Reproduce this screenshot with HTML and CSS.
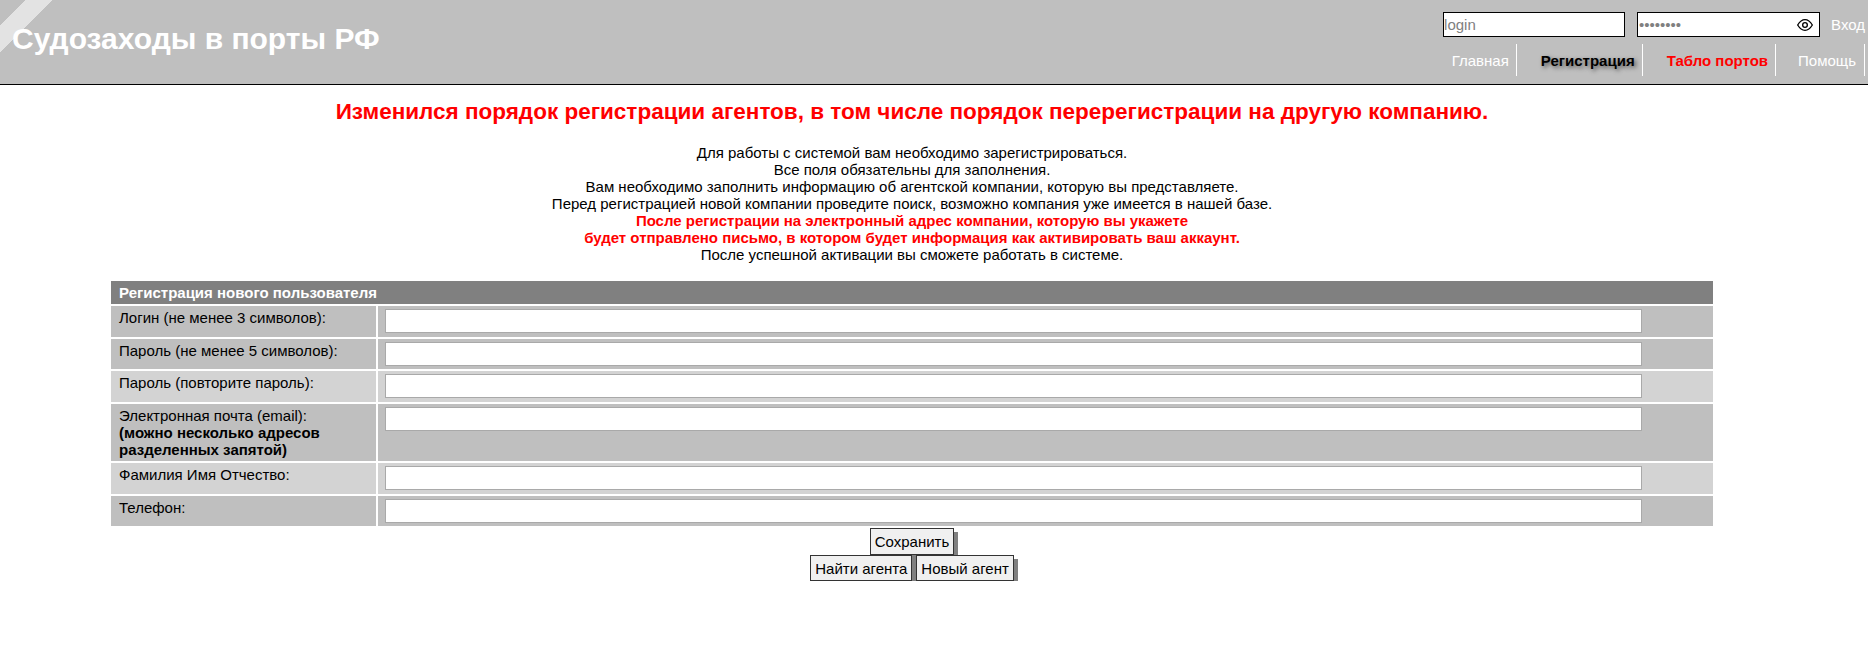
FILE: index.html
```html
<!DOCTYPE html>
<html lang="ru">
<head>
  <meta charset="UTF-8">
  <title>Судозаходы в порты РФ</title>
  <link rel="stylesheet" href="styles.css">
</head>
<body>

<div class="header">
  <div class="site-title">Судозаходы в порты РФ</div>
  <div class="header-right">
    <div class="login-form">
      <input class="login-input" type="text" placeholder="login">
      <div class="pass-box">
        <input class="pass-input" type="password" value="password">
        <svg class="eye" width="16" height="16" viewBox="0 0 24 24" fill="none" stroke="#000" stroke-width="2">
          <path d="M1 12c3-5 7-8 11-8s8 3 11 8c-3 5-7 8-11 8s-8-3-11-8z"/>
          <circle cx="12" cy="12" r="3.5"/>
        </svg>
      </div>
      <a class="login-link" href="#">Вход</a>
    </div>
    <div class="menu">
      <a href="#" class="menu-item">Главная</a>
      <a href="#" class="menu-item active">Регистрация</a>
      <a href="#" class="menu-item red">Табло портов</a>
      <a href="#" class="menu-item">Помощь</a>
    </div>
  </div>
</div>

<div class="content">
  <h1 class="notice">Изменился порядок регистрации агентов, в том числе порядок перерегистрации на другую компанию.</h1>

  <div class="intro">
    Для работы с системой вам необходимо зарегистрироваться.<br>
    Все поля обязательны для заполнения.<br>
    Вам необходимо заполнить информацию об агентской компании, которую вы представляете.<br>
    Перед регистрацией новой компании проведите поиск, возможно компания уже имеется в нашей базе.<br>
    <b class="warn">После регистрации на электронный адрес компании, которую вы укажете<br>
    будет отправлено письмо, в котором будет информация как активировать ваш аккаунт.</b><br>
    После успешной активации вы сможете работать в системе.
  </div>

  <table class="reg-table">
    <tr><th colspan="2">Регистрация нового пользователя</th></tr>
    <tr>
      <td class="label">Логин (не менее 3 символов):</td>
      <td class="input-cell"><input class="field" type="text"></td>
    </tr>
    <tr>
      <td class="label">Пароль (не менее 5 символов):</td>
      <td class="input-cell"><input class="field" type="password"></td>
    </tr>
    <tr class="light">
      <td class="label">Пароль (повторите пароль):</td>
      <td class="input-cell"><input class="field" type="password"></td>
    </tr>
    <tr>
      <td class="label">Электронная почта (email):<br><b>(можно несколько адресов разделенных запятой)</b></td>
      <td class="input-cell"><input class="field" type="text"></td>
    </tr>
    <tr class="light">
      <td class="label">Фамилия Имя Отчество:</td>
      <td class="input-cell"><input class="field" type="text"></td>
    </tr>
    <tr>
      <td class="label">Телефон:</td>
      <td class="input-cell"><input class="field" type="text"></td>
    </tr>
  </table>

  <div class="buttons">
    <button class="btn">Сохранить</button>
  </div>
  <div class="buttons">
    <button class="btn">Найти агента</button>
    <button class="btn">Новый агент</button>
  </div>
</div>

</body>
</html>
```

FILE: styles.css
```css
body {
    margin: 0;
    font-family: "Liberation Sans", Arial, sans-serif;
    font-size: 15px;
    color: #000;
    background-color: #fff;
}
.header {
    display: flex;
    justify-content: space-between;
    height: 84px;
    border-bottom: 1px solid #000;
    background: linear-gradient(135deg, #bfbfbf 18px, #e3e3e3 18px, #e3e3e3 37px, #bfbfbf 37px);
}
.site-title {
    padding: 22px 0 0 12px;
    font-size: 30px;
    font-weight: bold;
    color: #fff;
}
.header-right {
    display: flex;
    flex-direction: column;
    align-items: flex-end;
    margin-right: 3px;
}
.login-form {
    display: flex;
    align-items: center;
    padding-top: 12px;
}
.login-input {
    box-sizing: border-box;
    width: 182px;
    height: 25px;
    margin-right: 12px;
    padding: 0;
    border: 1px solid #000;
    font-family: inherit;
    font-size: 15px;
}
.login-input::placeholder {
    color: #808080;
}
.pass-box {
    display: flex;
    align-items: center;
    box-sizing: border-box;
    width: 183px;
    height: 25px;
    border: 1px solid #000;
    background-color: #fff;
}
.pass-input {
    flex: 1;
    min-width: 0;
    padding: 0 1px;
    border: 0;
    outline: 0;
    font-family: inherit;
    font-size: 15px;
    color: #808080;
}
.eye {
    margin-right: 6px;
}
.login-link {
    padding-left: 11px;
    color: #fff;
    text-decoration: none;
}
.menu {
    display: flex;
    margin-top: 7px;
}
.menu-item {
    height: 32px;
    padding: 0 7px 0 24px;
    border-right: 1px solid #fff;
    line-height: 34px;
    color: #fff;
    text-decoration: none;
}
.menu-item:last-child {
    padding: 0 8px 0 22px;
}
.menu-item.active {
    font-weight: bold;
    color: #000;
    text-shadow: 2px 2px 4px #555;
}
.menu-item.red {
    font-weight: bold;
    color: #f00;
}
.content {
    width: 1824px;
}
.notice {
    margin: 14px 0 0;
    font-size: 22.5px;
    text-align: center;
    color: #f00;
}
.intro {
    margin-top: 19px;
    text-align: center;
}
.warn {
    color: #f00;
}
.reg-table {
    width: 1606px;
    margin: 16px auto 0;
    border-spacing: 2px;
}
.reg-table th {
    height: 23px;
    padding: 0 8px;
    background-color: #808080;
    color: #fff;
    text-align: left;
}
.reg-table td {
    padding: 3px 8px;
    background-color: #bfbfbf;
    vertical-align: top;
}
.reg-table .input-cell {
    padding: 3px 7px 3.7px;
}
.reg-table tr.light td {
    background-color: #d3d3d3;
}
.reg-table .label {
    width: 249px;
}
.field {
    display: block;
    box-sizing: border-box;
    width: 1257px;
    height: 24px;
    border: 1px solid #a9a9a9;
    background-color: #fff;
}
.buttons {
    display: flex;
    justify-content: center;
    gap: 4px;
}
.btn {
    height: 26.5px;
    padding: 0 4px;
    border: 1px solid #333;
    background-color: #f0f0f0;
    box-shadow: 4px 4px 0 #808080;
    font-family: inherit;
    font-size: 15px;
}
```
